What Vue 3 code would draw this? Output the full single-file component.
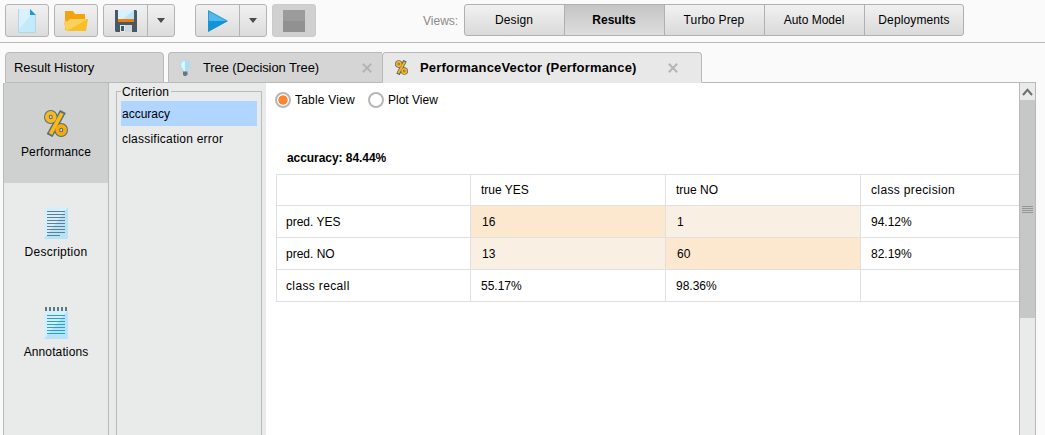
<script setup>
const views = [
  { name: 'Design', cls: 'ls1' },
  { name: 'Results', cls: 'current' },
  { name: 'Turbo Prep', cls: 'ls1' },
  { name: 'Auto Model', cls: '' },
  { name: 'Deployments', cls: 'ls1' },
]
const rows = [
  { label: 'pred. YES', cells: ['16', '1', '94.12%'], tones: ['strong', 'soft', ''] },
  { label: 'pred. NO', cells: ['13', '60', '82.19%'], tones: ['soft', 'strong', ''] },
  { label: 'class recall', cells: ['55.17%', '98.36%', ''], tones: ['', '', ''] },
]
</script>

<template>
  <div class="app">
    <header class="toolbar">
      <div class="btn">
        <svg width="18" height="24" viewBox="0 0 18 24">
          <path d="M0 0H12L18 6V24H0Z" fill="#c3e9fa" />
          <path d="M0 0H12L14 5L0 21Z" fill="#d8f1fc" />
          <path d="M12 0L18 6H12Z" fill="#1b9bdc" />
          <path d="M.5 0V23.5H17.5V6" fill="none" stroke="#b3d6e5" />
        </svg>
      </div>
      <div class="btn">
        <svg width="24" height="20" viewBox="0 0 24 20">
          <path d="M1 0H9L11 3H21V19H1Z" fill="#f2a40e" />
          <path d="M0 11L4 10L6 8H24L22 20H2Z" fill="#f9bf27" />
          <path d="M0 11L4 10L6 8H23L3 20H2Z" fill="#fbd05c" />
        </svg>
      </div>
      <div class="btn split">
        <div class="main">
          <svg width="22" height="22" viewBox="0 0 22 22">
            <path d="M0 0H21L22 1V22H1L0 21Z" fill="#465a65" />
            <path d="M3 0H19V9H3Z" fill="#b9e4fa" />
            <path d="M3 0H19L8 9H3Z" fill="#d9f1fc" />
            <path d="M3 9H19V12H3Z" fill="#f57c00" />
            <path d="M5 15H17V22H5Z" fill="#cfd8dc" />
            <path d="M5 15H10V22H5Z" fill="#e4e9eb" />
            <path d="M6 16H9V21H6Z" fill="#465a65" />
          </svg>
        </div>
        <div class="drop"><svg width="8" height="5" viewBox="0 0 8 5"><path d="M0 0H8L4 5Z" fill="#4c4c4c" /></svg></div>
      </div>
      <div class="btn split run">
        <div class="main">
          <svg width="20" height="22" viewBox="0 0 20 22">
            <path d="M0 0L20 11H0Z" fill="#4fb9ee" />
            <path d="M0 11H20L0 22Z" fill="#0f94dc" />
            <path d="M.5 .8L19 11L.5 21.2Z" fill="none" stroke="#2a8fc5" stroke-width=".8" />
          </svg>
        </div>
        <div class="drop"><svg width="8" height="5" viewBox="0 0 8 5"><path d="M0 0H8L4 5Z" fill="#4c4c4c" /></svg></div>
      </div>
      <div class="btn off">
        <svg width="22" height="22" viewBox="0 0 22 22">
          <rect width="22" height="22" fill="#919191" />
          <rect width="22" height="11" fill="#9b9b9b" />
        </svg>
      </div>
      <span class="views-label">Views:</span>
      <nav class="views">
        <div v-for="v in views" :key="v.name" class="view" :class="v.cls">{{ v.name }}</div>
      </nav>
    </header>

    <div class="tabs">
      <div class="tab history"><span>Result History</span></div>
      <div class="gap"></div>
      <div class="tab tree">
        <svg class="bulb" width="10" height="16" viewBox="0 0 10 16">
          <path d="M5 0C2 0 0 2 0 5C0 7.5 2 8.500 2.500 11.500H7.500C8 8.500 10 7.500 10 5C10 2 8 0 5 0Z" fill="#a9dcf5" />
          <path d="M5 1C2.500 1 1 3 1 5C1 7 3 8 3.500 11H5Z" fill="#dff4fd" />
          <path d="M3 11.500H7.500V14.500L6 16H4L3 14.500Z" fill="#667780" />
        </svg>
        <span>Tree (Decision Tree)</span>
        <svg class="close" width="10" height="10" viewBox="0 0 10 10"><path d="M.8 .8L9.200 9.200M9.200 .8L.8 9.200" stroke="#b5b5b5" stroke-width="2" /></svg>
      </div>
      <div class="tab perf">
        <svg class="pct" width="13" height="15" viewBox="0 0 24 27">
          <g fill="none" stroke="#4d6570">
            <ellipse cx="6.800" cy="7" rx="3.800" ry="4" stroke-width="6" />
            <ellipse cx="17.200" cy="20" rx="3.800" ry="4" stroke-width="6" />
            <path d="M18.500 1L5.500 26" stroke-width="7" />
          </g>
          <g fill="none" stroke="#fbb317" stroke-width="3.600">
            <ellipse cx="6.800" cy="7" rx="3.800" ry="4" />
            <ellipse cx="17.200" cy="20" rx="3.800" ry="4" />
            <path d="M18 3L6 24" />
          </g>
        </svg>
        <span>PerformanceVector (Performance)</span>
        <svg class="close" width="10" height="10" viewBox="0 0 10 10"><path d="M.8 .8L9.200 9.200M9.200 .8L.8 9.200" stroke="#b5b5b5" stroke-width="2" /></svg>
      </div>
      <div class="rest"></div>
    </div>

    <main class="panel">
      <aside class="side">
        <div class="item active">
          <svg width="24" height="27" viewBox="0 0 24 27">
            <g fill="none" stroke="#546e7a">
              <ellipse cx="6.800" cy="7" rx="3.900" ry="4.100" stroke-width="5.800" />
              <ellipse cx="17.200" cy="20" rx="3.900" ry="4.100" stroke-width="5.800" />
              <path d="M18.900 1.500L5.600 25.500" stroke-width="6.600" />
            </g>
            <g fill="none" stroke="#fbb81c" stroke-width="3.800">
              <ellipse cx="6.800" cy="7" rx="3.900" ry="4.100" />
              <path d="M18 3.200L6.500 24" />
              <ellipse cx="17.200" cy="20" rx="3.900" ry="4.100" stroke="#f8a90b" />
            </g>
          </svg>
          <span class="ls1">Performance</span>
        </div>
        <div class="item">
          <svg width="24" height="32" viewBox="0 0 24 32">
            <rect width="24" height="32" fill="#b7e3f8" />
            <path d="M0 0H24L0 32Z" fill="#d6effb" />
            <path d="M3 4.500H21M3 7.500H21M3 10.500H21M3 13.500H21M3 16.500H21M3 19.500H21M3 22.500H21M3 25.500H21M3 28.500H16" stroke="#5f7f8f" />
          </svg>
          <span class="ls2">Description</span>
        </div>
        <div class="item">
          <svg width="24" height="32" viewBox="0 0 24 32">
            <rect y="3" width="24" height="29" fill="#b7e3f8" />
            <path d="M0 3H24L0 32Z" fill="#d6effb" />
            <path d="M1 2H24" stroke="#607782" stroke-width="4" stroke-dasharray="2 2" />
            <path d="M3 8.500H21M3 11.500H21M3 14.500H21M3 17.500H21M3 20.500H21M3 23.500H21M3 26.500H21" stroke="#23a1df" />
          </svg>
          <span class="ls1">Annotations</span>
        </div>
      </aside>

      <section class="criteria">
        <div class="group">
          <div class="legend">Criterion</div>
          <div class="crit selected">accuracy</div>
          <div class="crit ls3">classification error</div>
        </div>
      </section>

      <section class="content">
        <div class="radios">
          <i class="radio on"></i><span class="first">Table View</span>
          <i class="radio"></i><span>Plot View</span>
        </div>
        <h1>accuracy: 84.44%</h1>
        <div class="grid">
          <div class="cell head"></div>
          <div class="cell head">true YES</div>
          <div class="cell head">true NO</div>
          <div class="cell head ls4">class precision</div>
          <template v-for="r in rows" :key="r.label">
            <div class="cell" :class="{ ls4: r.label === 'class recall' }">{{ r.label }}</div>
            <div v-for="(c, i) in r.cells" :key="i" class="cell num" :class="r.tones[i]">{{ c }}</div>
          </template>
        </div>
      </section>

      <div class="scroll">
        <div class="up"><svg width="11" height="8" viewBox="0 0 11 8"><path d="M1 7L5.500 1.800L10 7" fill="none" stroke="#6b6f6d" stroke-width="2" /></svg></div>
        <div class="thumb"><i></i><i></i><i></i><i></i></div>
      </div>
    </main>
  </div>
</template>

<style>
body { margin: 0; background: #fafafa; overflow: hidden; }
</style>

<style scoped>
* { box-sizing: border-box; }
.app {
  width: 1045px; height: 435px; overflow: hidden;
  display: flex; flex-direction: column;
  background: #fafafa; color: #000;
  font: 12px/14px "Liberation Sans", Arial, sans-serif;
  white-space: nowrap;
}
svg { display: block; flex: none; }
.ls1 { letter-spacing: .12px; }
.ls2 { letter-spacing: .25px; }
.ls3 { letter-spacing: .22px; }
.ls4 { letter-spacing: .36px; }

.toolbar { height: 43px; flex: none; border-bottom: 1px solid #b9b9b9; display: flex; align-items: flex-start; padding: 4px 0 0 5px; }
.btn {
  width: 44px; height: 33px; margin-right: 5px; flex: none;
  border: 1px solid #b4b4b4; border-radius: 3px;
  background: linear-gradient(#f1f1f1, #dcdcdc);
  display: flex; align-items: center; justify-content: center;
}
.btn.split { width: 72px; margin-right: 20px; }
.btn.run { margin-right: 5px; }
.main { width: 43px; display: flex; justify-content: center; }
.drop { width: 27px; height: 31px; border-left: 1px solid #b4b4b4; display: flex; align-items: center; justify-content: center; }
.btn.off { background: #d0d0d0; border-color: #cbcbcb; margin: 0; }
.views-label { color: #8a8a8a; margin: 10px 0 0 107px; width: 41px; flex: none; }
.views { display: flex; width: 500px; height: 32px; border: 1px solid #b0b0b0; border-radius: 3px; background: linear-gradient(#f1f1f1, #dadada); overflow: hidden; }
.view { flex: none; width: 100px; padding-right: 1px; text-align: center; line-height: 30px; border-left: 1px solid #b0b0b0; }
.view:first-child { width: 99px; border-left: 0; }
.view.current { background: linear-gradient(#c4c4c4, #dedede); font-weight: bold; }

.tabs { height: 40px; flex: none; padding: 9px 9px 0 5px; display: flex; font-size: 13px; line-height: 15px; }
.tab { height: 31px; border: 1px solid #b9b9b9; border-radius: 4px 4px 0 0; background: #d5d5d5; display: flex; align-items: center; flex: none; }
.tab span { flex: none; }
.history { width: 159px; padding-left: 8px; letter-spacing: -.05px; }
.gap { width: 4px; border-bottom: 1px solid #b9b9b9; }
.tree { width: 214px; border-right: 0; border-top-right-radius: 0; }
.tree .bulb { margin: 0 13px 0 11px; }
.tree span { width: 159px; letter-spacing: -.1px; }
.perf { width: 320px; background: #e8e8e8; border-bottom-color: #e8e8e8; font-weight: bold; }
.perf .pct { margin: 0 12px 0 12px; }
.perf span { width: 248px; letter-spacing: .18px; }
.rest { flex: 1; border-bottom: 1px solid #b9b9b9; }

.panel { flex: 1; margin: 0 9px 0 3px; border: solid #b9b9b9; border-width: 0 1px; display: flex; background: #fff; }
.side { width: 105px; background: #e8ebea; border-right: 1px solid #b9bbba; }
.item { height: 100px; display: flex; flex-direction: column; align-items: center; padding-top: 24px; }
.item span { margin-top: 6px; }
.item.active { background: #cfd1d0; padding-top: 27px; }
.item.active span { margin-top: 8px; }
.criteria { width: 157px; background: #e8ebea; padding: 8px 4px 0 7px; display: flex; }
.group { flex: 1; border: 1px solid #b9bbba; border-bottom: 0; padding: 0 4px; }
.legend { width: 50px; height: 12px; margin: -7px 0 4px 0; padding-left: 1px; background: #e8ebea; letter-spacing: .2px; }
.crit { height: 25px; line-height: 26px; padding-left: 1px; }
.selected { background: #b0d5fe; width: 136px; }
.content { width: 753px; padding-left: 10px; overflow: hidden; }
.radios { display: flex; align-items: center; height: 16px; margin: 9px 0 0 -1px; }
.radio { width: 16px; height: 16px; border: 2px solid #b7b7b7; border-radius: 50%; margin-right: 4px; background: #fff; }
.radio.on { background: radial-gradient(circle, #ff842b 4.3px, #fff 5px); }
.first { width: 73px; letter-spacing: .2px; }
h1 { margin: 43px 0 9px 11px; font-size: 12px; line-height: 14px; letter-spacing: -.06px; }
.grid { display: grid; grid-template-columns: 194px 195px 195px 160px; grid-template-rows: 31px 32px 32px 32px; border: 1px solid #e0e0e0; border-width: 1px 0 0 1px; width: 744px; }
.cell { border: solid #e0e0e0; border-width: 0 1px 1px 0; padding-left: 9px; line-height: 32px; overflow: hidden; }
.cell.head { line-height: 30px; }
.cell.head:not(:first-child), .num { padding-left: 10px; }
.num.strong { background: #fbe8cf; padding-left: 11px; }
.num.soft { background: #f9efe2; padding-left: 11px; }
.scroll { width: 16px; flex: none; border-left: 1px solid #b9b9b9; background: #e8ebea; }
.up { height: 17px; display: flex; align-items: center; justify-content: center; }
.thumb { height: 218px; background: #c6c8c7; display: flex; flex-direction: column; align-items: center; justify-content: center; gap: 1px; }
.thumb i { width: 11px; height: 1px; background: #949695; }
</style>
